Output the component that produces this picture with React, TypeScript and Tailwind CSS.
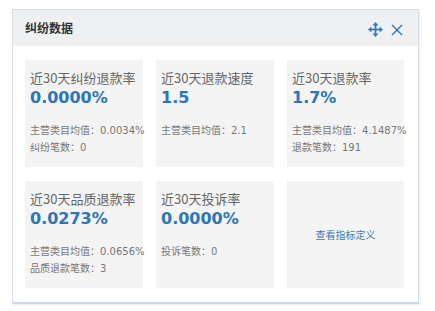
import React from "react";

interface Metric {
  title: string;
  value: string;
  lines: string[];
}

const metrics: Metric[] = [
  { title: "近30天纠纷退款率", value: "0.0000%", lines: ["主营类目均值：0.0034%", "纠纷笔数：0"] },
  { title: "近30天退款速度", value: "1.5", lines: ["主营类目均值：2.1"] },
  { title: "近30天退款率", value: "1.7%", lines: ["主营类目均值：4.1487%", "退款笔数：191"] },
  { title: "近30天品质退款率", value: "0.0273%", lines: ["主营类目均值：0.0656%", "品质退款笔数：3"] },
  { title: "近30天投诉率", value: "0.0000%", lines: ["投诉笔数：0"] },
];

const cjk = { fontFamily: '"Noto Sans CJK SC", sans-serif' };
const num = { fontFamily: '"DejaVu Sans", "Noto Sans CJK SC", sans-serif' };

function MoveIcon() {
  return (
    <svg width="15" height="15" viewBox="0 0 15 15" fill="#3479b8">
      <rect x="6.6" y="2.5" width="1.8" height="10" />
      <rect x="2.5" y="6.6" width="10" height="1.8" />
      <polygon points="7.5,0 10.5,3.4 4.5,3.4" />
      <polygon points="7.5,15 10.5,11.6 4.5,11.6" />
      <polygon points="0,7.5 3.4,4.5 3.4,10.5" />
      <polygon points="15,7.5 11.6,4.5 11.6,10.5" />
    </svg>
  );
}

function CloseIcon() {
  return (
    <svg width="12" height="12" viewBox="0 0 12 12" stroke="#3479b8" strokeWidth="1.4" fill="none">
      <line x1="1" y1="1" x2="11" y2="11" />
      <line x1="11" y1="1" x2="1" y2="11" />
    </svg>
  );
}

function MetricCard({ m }: { m: Metric }) {
  return (
    <div className="h-[107px] bg-[#f4f4f4] px-[5px] pt-[9px]">
      <div className="text-[13px] leading-[18px] text-[#666]" style={cjk}>
        {m.title}
      </div>
      <div className="text-[16px] font-bold leading-[22px] text-[#2a76bd]" style={num}>
        {m.value}
      </div>
      <div className="mt-[13px] text-[10px] leading-[17px] text-[#777]" style={num}>
        {m.lines.map((l, i) => (
          <div key={i} className="whitespace-nowrap">
            {l}
          </div>
        ))}
      </div>
    </div>
  );
}

export default function App() {
  return (
    <div className="h-[311px] w-[435px] bg-white pl-[12px] pt-[9px]">
      <div className="w-[407px] border border-[#d6dee4] border-b-2 border-b-[#cbd9e2] bg-white shadow-[1px_1px_2px_rgba(150,170,185,0.25)]">
        <div className="flex h-[36px] items-center justify-between bg-[#eef0f1] pl-[12px] pr-[15px]">
          <span className="text-[12px] font-bold text-[#333]" style={cjk}>
            纠纷数据
          </span>
          <div className="mt-[3px] flex items-center gap-[8px]">
            <MoveIcon />
            <CloseIcon />
          </div>
        </div>
        <div className="grid grid-cols-[118px_118px_117px] gap-x-[13px] gap-y-[14px] pb-[14px] pl-[12px] pt-[14px]">
          {metrics.map((m, i) => (
            <MetricCard key={i} m={m} />
          ))}
          <div className="flex h-[107px] items-center justify-center bg-[#f4f4f4]">
            <span className="text-[10px] text-[#3a78b5]" style={cjk}>
              查看指标定义
            </span>
          </div>
        </div>
      </div>
    </div>
  );
}
